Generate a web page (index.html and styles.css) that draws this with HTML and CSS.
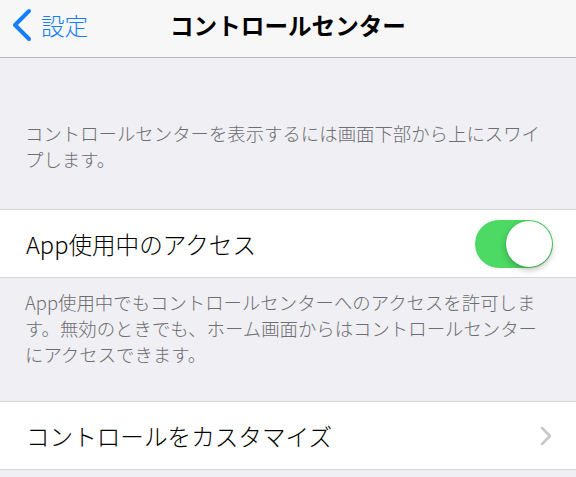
FILE: index.html
```html
<!DOCTYPE html>
<html lang="ja">

<head>
    <meta charset="UTF-8">
    <meta name="viewport" content="width=device-width, initial-scale=1.0">
    <title>コントロールセンター</title>
    <link rel="stylesheet" href="styles.css">
</head>

<body>

    <div class="nav-bar">
        <div class="back-button">
            <svg class="chevron" width="22" height="34" viewBox="0 0 22 34">
                <polyline points="18,3 4,17 18,31" />
            </svg>
            <span>設定</span>
        </div>
        <div class="title">コントロールセンター</div>
    </div>

    <div class="group-text first">
        コントロールセンターを表示するには画面下部から上にスワイ<br>プします。
    </div>

    <div class="cell">
        <div class="label">App使用中のアクセス</div>
        <div class="switch on">
            <div class="knob"></div>
        </div>
    </div>

    <div class="group-text">
        App使用中でもコントロールセンターへのアクセスを許可しま<br>す。無効のときでも、ホーム画面からはコントロールセンター<br>にアクセスできます。
    </div>

    <div class="cell">
        <div class="label">コントロールをカスタマイズ</div>
        <svg class="disclosure" width="14" height="22" viewBox="0 0 14 22">
            <polyline points="3,3 11,11 3,19" />
        </svg>
    </div>

</body>

</html>
```

FILE: styles.css
```css
body {
    font-family: "Noto Sans CJK JP", sans-serif;
    margin: 0;
    padding: 0;
    height: 100vh;
    background-color: #efeff4;
    overflow: hidden;
}

.nav-bar {
    position: relative;
    height: 50px;
    padding-bottom: 7px;
    display: flex;
    align-items: center;
    justify-content: center;
    background-color: #f7f7f8;
    border-bottom: 1px solid #b8b8bc;
}

.nav-bar .back-button {
    position: absolute;
    left: 11px;
    top: 8px;
    display: flex;
    align-items: center;
    gap: 8px;
    color: #147efb;
    font-size: 23.6px;
    font-weight: 300;
    line-height: 34px;
}

.back-button .chevron polyline {
    fill: none;
    stroke: #147efb;
    stroke-width: 4;
    stroke-linecap: round;
    stroke-linejoin: round;
}

.nav-bar .title {
    font-size: 23.6px;
    font-weight: bold;
    color: #000;
}

.group-text {
    padding: 11px 25px 34px;
    font-size: 18.4px;
    font-weight: 300;
    line-height: 26px;
    color: #6d6d72;
    white-space: nowrap;
}

.group-text.first {
    padding-top: 62px;
    padding-bottom: 37px;
}

.cell {
    height: 67px;
    padding: 0 23px 0 26px;
    display: flex;
    align-items: center;
    justify-content: space-between;
    background-color: white;
    border-top: 1px solid #d6d6da;
    border-bottom: 1px solid #d6d6da;
}

.cell .label {
    font-size: 23.6px;
    font-weight: 300;
    color: #000;
}

.switch {
    position: relative;
    width: 78px;
    height: 48px;
    border-radius: 24px;
    background-color: #4cd964;
    box-sizing: border-box;
}

.switch .knob {
    position: absolute;
    right: 1px;
    top: 1px;
    width: 46px;
    height: 46px;
    border-radius: 50%;
    background-color: white;
    box-shadow: 0 3px 6px rgba(0, 0, 0, 0.25), 0 0 0 1px rgba(0, 0, 0, 0.04);
}

.disclosure polyline {
    fill: none;
    stroke: #c7c7cc;
    stroke-width: 2.6;
    stroke-linecap: round;
    stroke-linejoin: round;
}
```
